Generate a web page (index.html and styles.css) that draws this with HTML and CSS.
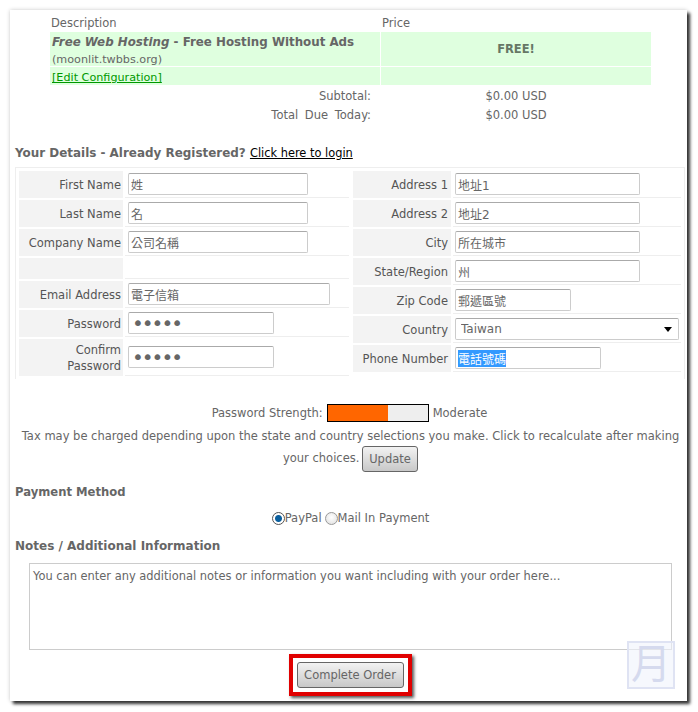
FILE: index.html
```html
<!DOCTYPE html>
<html lang="en">
<head>
  <meta charset="UTF-8" />
  <meta name="viewport" content="width=device-width, initial-scale=1.0" />
  <title>Order Form</title>
  <link rel="stylesheet" href="styles.css">
</head>
<body>
  <div class="card">
    <table class="cart">
      <tr class="cart-head">
        <td class="cart-desc">Description</td>
        <td class="head-price">Price</td>
      </tr>
      <tr class="cart-item">
        <td class="cart-desc"><span class="item-text"><b><i>Free Web Hosting</i> - Free Hosting Without Ads</b><br>(moonlit.twbbs.org)</span></td>
        <td class="cart-price"><b class="free">FREE!</b></td>
      </tr>
      <tr class="cart-item cart-edit">
        <td class="cart-desc"><a class="edit-link" href="#">[Edit Configuration]</a></td>
        <td></td>
      </tr>
      <tr class="cart-total">
        <td class="total-label">Subtotal:</td>
        <td class="cart-price">$0.00 USD</td>
      </tr>
      <tr class="cart-total">
        <td class="total-label">Total Due Today:</td>
        <td class="cart-price">$0.00 USD</td>
      </tr>
    </table>

    <h2 class="section-title details-title">Your Details - Already Registered? <a class="login-link" href="#">Click here to login</a></h2>

    <div class="details">
      <table class="fields fields-left">
        <tr><td class="label">First Name</td><td class="field"><input class="w180" type="text" value="姓"></td></tr>
        <tr><td class="label">Last Name</td><td class="field"><input class="w180" type="text" value="名"></td></tr>
        <tr><td class="label">Company Name</td><td class="field"><input class="w180" type="text" value="公司名稱"></td></tr>
        <tr class="row-empty"><td class="label"></td><td class="field"></td></tr>
        <tr><td class="label">Email Address</td><td class="field"><input class="w202" type="text" value="電子信箱"></td></tr>
        <tr><td class="label">Password</td><td class="field"><input class="w146 pass" type="password" value="12345"></td></tr>
        <tr class="row-tall"><td class="label">Confirm Password</td><td class="field"><input class="w146 pass" type="password" value="12345"></td></tr>
      </table>
      <table class="fields fields-right">
        <tr><td class="label">Address 1</td><td class="field"><input class="w185" type="text" value="地址1"></td></tr>
        <tr><td class="label">Address 2</td><td class="field"><input class="w185" type="text" value="地址2"></td></tr>
        <tr><td class="label">City</td><td class="field"><input class="w185" type="text" value="所在城市"></td></tr>
        <tr><td class="label">State/Region</td><td class="field"><input class="w185" type="text" value="州"></td></tr>
        <tr><td class="label">Zip Code</td><td class="field"><input class="w116" type="text" value="郵遞區號"></td></tr>
        <tr><td class="label">Country</td><td class="field">
          <span class="select-wrap"><select class="country"><option>Taiwan</option></select></span>
        </td></tr>
        <tr><td class="label">Phone Number</td><td class="field"><input class="w146 phone" id="phone" type="text" value="電話號碼"></td></tr>
      </table>
    </div>

    <div class="strength">
      Password Strength:
      <span class="strength-bar"><span class="strength-fill" style="width:60%"></span></span>
      Moderate
    </div>
    <p class="tax">Tax may be charged depending upon the state and country selections you make. Click to recalculate after making your choices. <button class="btn btn-update" type="button">Update</button></p>

    <h2 class="section-title payment-title">Payment Method</h2>
    <div class="payment">
      <label><input type="radio" name="pay" checked>PayPal</label>
      <label><input type="radio" name="pay">Mail In Payment</label>
    </div>

    <h2 class="section-title notes-title">Notes / Additional Information</h2>
    <textarea class="notes">You can enter any additional notes or information you want including with your order here...</textarea>

    <div class="submit">
      <span class="highlight"><button class="btn btn-order" type="button">Complete Order</button></span>
    </div>

    <div class="watermark">月</div>
  </div>

  <script>
    // the phone field is shown focused with its text selected
    const phone = document.getElementById('phone');
    phone.focus();
    phone.select();
  </script>
</body>
</html>
```

FILE: styles.css
```css
* {
  box-sizing: border-box;
}
html, body {
  margin: 0;
  padding: 0;
  background-color: #fff;
}
body {
  padding: 10px 0 0 10px;
  height: 712px;
  overflow: hidden;
  color: #666;
  font-family: "DejaVu Sans", "Noto Sans CJK TC", sans-serif;
  font-size: 11.5px;
}
.card {
  position: relative;
  width: 677px;
  height: 691px;
  padding: 4px 5px 0;
  background-color: #fff;
  box-shadow: 3px 3px 3px #333, 0 0 4px #ccc;
}
table {
  border-collapse: separate;
}
td {
  padding: 0;
}

/* cart */
.cart {
  width: 601px;
  margin-left: 35px;
  border-spacing: 0;
  line-height: 18px;
}
.cart-desc {
  width: 331px;
  padding-left: 2px;
}
.cart-head td {
  height: 18px;
}
.cart-head .cart-desc {
  padding-left: 1px;
}
.head-price {
  padding-left: 1px;
}
.cart-item td {
  background-color: #dfffdf;
  border-bottom: 1px solid #fff;
}
.cart-item td:first-child {
  border-right: 1px solid #fff;
}
.cart-item:nth-child(2) td {
  height: 35px;
  font-size: 11.2px;
  line-height: 17px;
}
.item-text b {
  font-size: 11.85px;
}
.item-text {
  display: block;
  height: 34px;
  padding-top: 2px;
}
.free {
  color: #667766;
  font-size: 11.5px;
}
.cart-edit td {
  height: 18px;
  font-size: 11.2px;
  line-height: 14px;
  padding-top: 4px;
}
.cart-price {
  text-align: center;
}
.edit-link {
  color: #090;
}
.total-label {
  height: 19px;
  padding-right: 10px;
  text-align: right;
  word-spacing: 3px;
}

/* headings */
.section-title {
  margin: 0;
  font-size: 12px;
  font-weight: bold;
  line-height: 16px;
}
.details-title {
  margin-top: 21px;
  font-size: 11.95px;
}
.login-link {
  color: #000;
  font-size: 11.4px;
  font-weight: normal;
}
.payment-title {
  margin-top: 15px;
  font-size: 11.6px;
}
.notes-title {
  margin-top: 11px;
}

/* details box */
.details {
  display: flex;
  width: 670px;
  height: 212px;
  margin-top: 6px;
  padding: 1px 0 0 1px;
  border: 1px solid #eee;
  border-bottom: 0;
}
.fields {
  border-spacing: 2px;
  table-layout: fixed;
  height: 0;
}
.fields-left {
  width: 334px;
}
.fields-right {
  width: 332px;
}
.fields tr {
  height: 27px;
}
.label {
  padding: 0 3px 0 4px;
  background-color: #f3f3f3;
  line-height: 16px;
  text-align: right;
  color: #555;
}
.fields-left .label {
  width: 104px;
  padding-right: 2px;
}
.fields-right .label {
  width: 98px;
}
.field {
  padding: 0 0 0 2px;
  border-bottom: 1px solid #eee;
  vertical-align: middle;
}
.fields-left .field {
  padding-left: 3px;
}
.fields .row-empty {
  height: 21px;
}
.fields .row-tall {
  height: 37px;
}
input[type="text"], input[type="password"], select {
  display: block;
  height: 22px;
  padding: 0 2px;
  border: 1px solid #ccc;
  border-top-color: #aaa;
  border-radius: 2px;
  outline: none;
  color: #666;
  font-family: inherit;
  font-size: 12px;
}
.w116 { width: 116px; }
.w146 { width: 146px; }
.w180 { width: 180px; }
.w185 { width: 185px; }
.w202 { width: 202px; }
input.pass {
  padding-left: 3px;
  font-size: 20px;
  letter-spacing: -2px;
}
.phone {
  border-color: #7ba7c7;
}
.phone::selection {
  background-color: #39f;
  color: #fff;
}
.select-wrap {
  position: relative;
  display: block;
  width: 224px;
}
.select-wrap::after {
  content: "";
  position: absolute;
  right: 7px;
  top: 9px;
  border-top: 5px solid #000;
  border-left: 4px solid transparent;
  border-right: 4px solid transparent;
}
select.country {
  width: 100%;
  padding-left: 5px;
  appearance: none;
  background-color: #fff;
}

/* password + tax */
.strength {
  display: flex;
  justify-content: center;
  align-items: center;
  gap: 4px;
  margin-top: 25px;
  padding-left: 2px;
  height: 18px;
}
.strength-bar {
  display: block;
  width: 102px;
  height: 18px;
  border: 1px solid #000;
  background-color: #eee;
}
.strength-fill {
  display: block;
  height: 100%;
  background-color: #f60;
}
.tax {
  margin: 3px 0 0;
  padding-left: 4px;
  line-height: 22px;
  text-align: center;
}
.btn {
  padding: 0 6px;
  height: 26px;
  border: 1px solid #666;
  border-radius: 3px;
  background: linear-gradient(to bottom, #f2f2f2, #c8c8c8);
  color: #666;
  font-family: inherit;
  font-size: 11.5px;
  white-space: nowrap;
}
.btn-update {
  width: 56px;
  margin: -4px 0 -4px -1px;
  vertical-align: middle;
}

/* payment */
.payment {
  display: flex;
  justify-content: center;
  gap: 3px;
  margin-top: 9px;
  padding-left: 4px;
  height: 18px;
  line-height: 18px;
}
.payment label {
  display: flex;
  align-items: center;
}
.payment input {
  width: 13px;
  height: 13px;
  margin: 0;
  appearance: none;
  border: 1px solid #999;
  border-radius: 50%;
  background: radial-gradient(circle at 50% 40%, #fff, #ddd);
}
.payment input:checked {
  border-color: #555;
  background: radial-gradient(circle, #0a5f9e 0, #0a5f9e 3px, #fff 4px);
}

/* notes */
.notes {
  display: block;
  width: 643px;
  height: 87px;
  margin: 9px 0 0 14px;
  padding: 4px 3px;
  border: 1px solid #ccc;
  outline: none;
  resize: none;
  color: #666;
  font-family: inherit;
  font-size: 11.45px;
  line-height: 16px;
}

/* submit */
.submit {
  display: flex;
  justify-content: center;
  margin-top: 4px;
  padding-left: 3px;
}
.highlight {
  display: block;
  padding: 4px;
  border: 4px solid #e00000;
  box-shadow: 2px 2px 3px #555;
  line-height: 0;
}
.btn-order {
  width: 107px;
}
.watermark {
  position: absolute;
  left: 617px;
  top: 631px;
  width: 48px;
  height: 48px;
  border: 2px solid #dfe3f3;
  background-color: rgba(240, 243, 252, 0.6);
  color: #d5daee;
  font-size: 40px;
  line-height: 42px;
  text-align: center;
}
```
